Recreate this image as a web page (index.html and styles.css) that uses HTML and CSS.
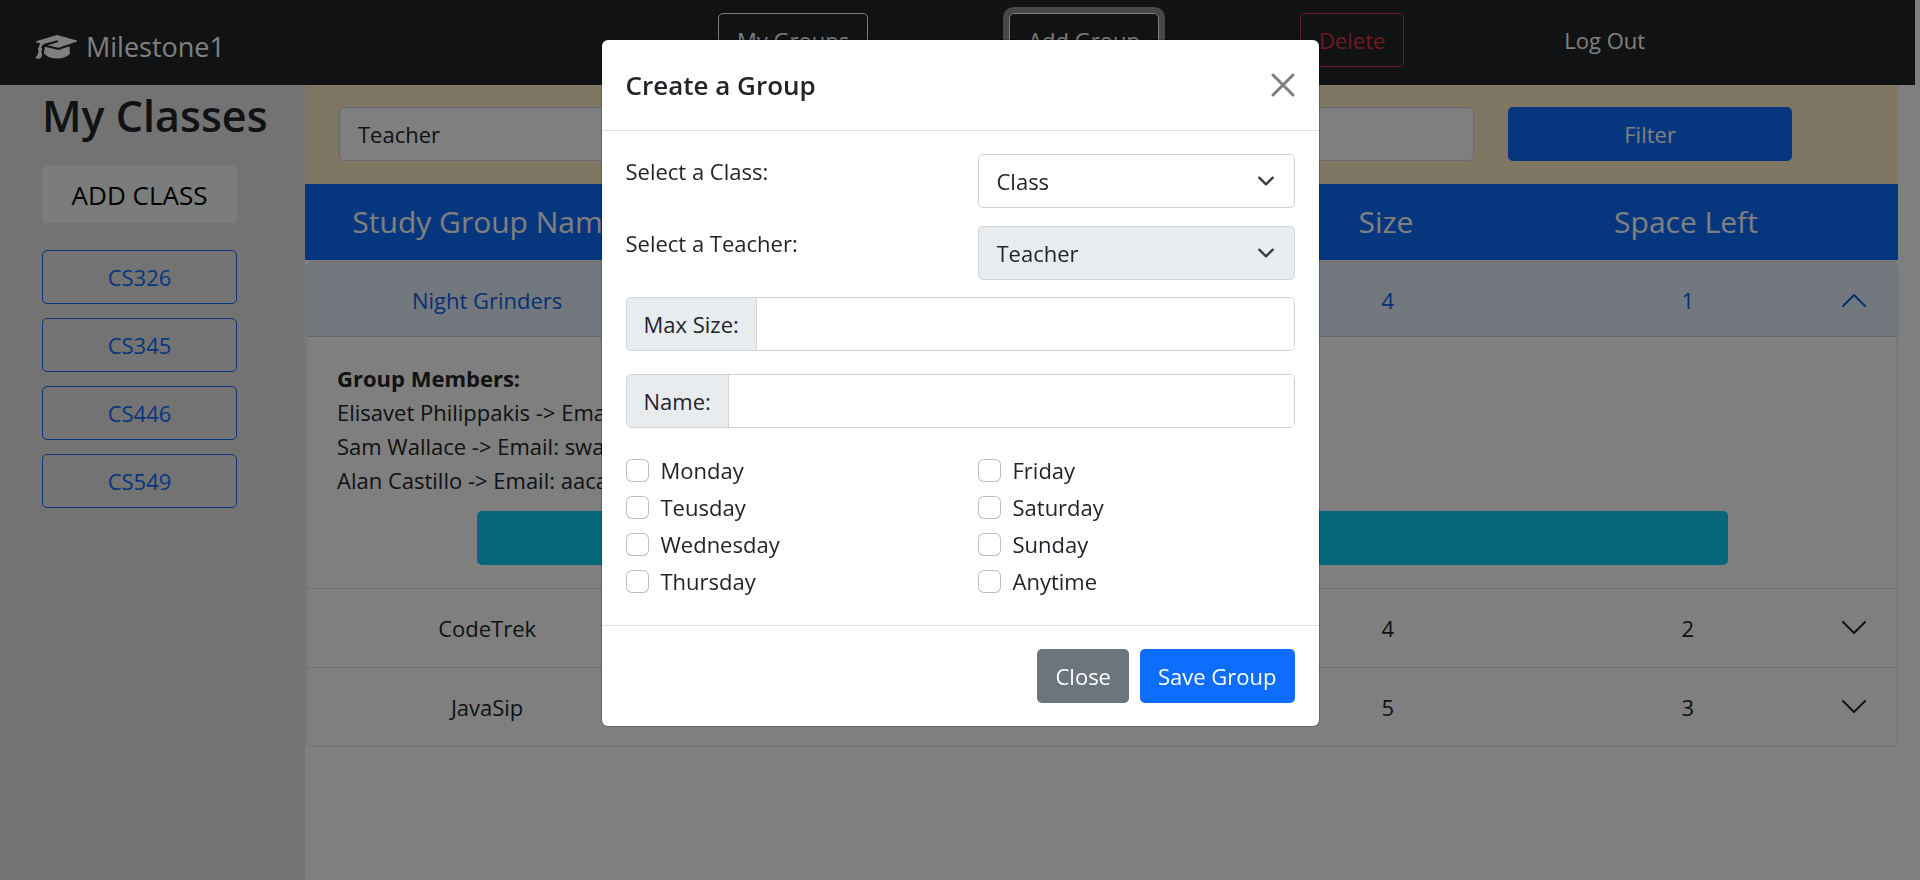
FILE: index.html
```html
<!DOCTYPE html>
<html lang="en">
<head>
<meta charset="utf-8">
<meta name="viewport" content="width=device-width, initial-scale=1">
<title>Milestone1</title>
<link rel="stylesheet" href="styles.css">
</head>
<body>
<header class="navbar">
  <a class="brand" href="#">
    <svg class="brand-icon" viewBox="0 0 42 26" aria-hidden="true">
      <path d="M22 1 42 6.500Q42.500 7 42 7.500L23.500 13.800 12.500 11.300 23.500 8 22.500 6.300 9.500 9.800Q6.500 11 6.300 13.500 8 15 6.500 17L7 22Q6 25 3.500 24.800L0.500 24.300Q0 23.500 1.500 22.500 3.300 20 3.500 17 2.200 15 3.800 13.500 4 11 5.500 9.500L1 8.200Q0.500 7.500 1 7.200Z"/>
      <path d="M10 12.700 23.500 16 34.500 12.200 35 19.500Q31 24.500 22 24.500 13.500 24.500 9 19.500L9 18Q9.500 15 10 12.700Z"/>
    </svg>
    <span>Milestone1</span>
  </a>
  <nav class="nav-links">
    <button class="btn btn-outline-light" type="button">My Groups</button>
    <button class="btn btn-outline-light is-focused" type="button">Add Group</button>
    <button class="btn btn-outline-danger" type="button">Delete</button>
    <a class="btn nav-link" href="#">Log Out</a>
  </nav>
</header>

<div class="page">
  <aside class="sidebar">
    <h1 class="sidebar-title">My Classes</h1>
    <button class="btn btn-add" type="button">ADD CLASS</button>
    <div class="class-list">
      <button class="btn btn-outline-primary" type="button">CS326</button>
      <button class="btn btn-outline-primary" type="button">CS345</button>
      <button class="btn btn-outline-primary" type="button">CS446</button>
      <button class="btn btn-outline-primary" type="button">CS549</button>
    </div>
  </aside>

  <main class="main">
    <form class="filter-bar">
      <select class="select select-plain" aria-label="Filter by teacher"><option>Teacher</option></select>
      <button class="btn btn-primary" type="button">Filter</button>
    </form>
    <div class="grid-row table-head">
      <span>Study Group Name</span><span></span><span></span><span>Size</span><span>Space Left</span>
    </div>
    <section class="accordion">
      <div class="item">
        <button class="grid-row item-head is-open" type="button" aria-expanded="true">
          <span>Night Grinders</span><span></span><span></span><span>4</span><span>1</span>
          <svg class="chevron" viewBox="0 0 24 14" aria-hidden="true"><path d="M1 13 12 2 23 13"/></svg>
        </button>
        <div class="item-body">
          <strong>Group Members:</strong>
          <p>Elisavet Philippakis -&gt; Email:</p>
          <p>Sam Wallace -&gt; Email: swallace</p>
          <p>Alan Castillo -&gt; Email: aacastillo</p>
          <button class="btn btn-info" type="button" aria-label="Join group"></button>
        </div>
      </div>
      <div class="item">
        <button class="grid-row item-head" type="button" aria-expanded="false">
          <span>CodeTrek</span><span></span><span></span><span>4</span><span>2</span>
          <svg class="chevron" viewBox="0 0 24 14" aria-hidden="true"><path d="M1 1 12 12 23 1"/></svg>
        </button>
      </div>
      <div class="item">
        <button class="grid-row item-head" type="button" aria-expanded="false">
          <span>JavaSip</span><span></span><span></span><span>5</span><span>3</span>
          <svg class="chevron" viewBox="0 0 24 14" aria-hidden="true"><path d="M1 1 12 12 23 1"/></svg>
        </button>
      </div>
    </section>
  </main>
</div>

<div class="backdrop">
  <form class="modal" role="dialog" aria-labelledby="modal-title">
    <div class="modal-header">
      <h2 class="modal-title" id="modal-title">Create a Group</h2>
      <button class="close-x" type="button" aria-label="Close">
        <svg viewBox="0 0 24 24" aria-hidden="true"><path d="M2 2 22 22M22 2 2 22"/></svg>
      </button>
    </div>
    <div class="modal-body">
      <div class="pair">
        <label class="pair-label" for="class">Select a Class:</label>
        <select class="select" id="class"><option>Class</option></select>
        <label class="pair-label" for="teacher">Select a Teacher:</label>
        <select class="select" id="teacher" disabled><option>Teacher</option></select>
      </div>
      <div class="input-group">
        <label for="size">Max Size:</label>
        <input id="size" type="text">
      </div>
      <div class="input-group">
        <label for="name">Name:</label>
        <input id="name" type="text">
      </div>
      <div class="days">
        <label class="day"><input type="checkbox">Monday</label>
        <label class="day"><input type="checkbox">Teusday</label>
        <label class="day"><input type="checkbox">Wednesday</label>
        <label class="day"><input type="checkbox">Thursday</label>
        <label class="day"><input type="checkbox">Friday</label>
        <label class="day"><input type="checkbox">Saturday</label>
        <label class="day"><input type="checkbox">Sunday</label>
        <label class="day"><input type="checkbox">Anytime</label>
      </div>
    </div>
    <div class="modal-footer">
      <button class="btn btn-secondary" type="button">Close</button>
      <button class="btn btn-primary" type="button">Save Group</button>
    </div>
  </form>
</div>
</body>
</html>
```

FILE: styles.css
```css
*, *::before, *::after { box-sizing: border-box; }

body {
  margin: 0;
  min-height: 100vh;
  display: flex;
  flex-direction: column;
  background: #fff;
  color: #212529;
  font-family: "Open Sans", "Noto Sans", sans-serif;
  font-size: 22px;
  line-height: 34px;
}

h1, h2, p { margin: 0; }
button, input, select { font: inherit; color: inherit; }

.btn {
  padding: 9px 17px;
  border: 1px solid transparent;
  border-radius: 5px;
  background: transparent;
  text-align: center;
  text-decoration: none;
  white-space: nowrap;
}
.btn-primary { background: #0d6efd; color: #fff; }
.btn-secondary { background: #6c757d; color: #fff; }
.btn-info { background: #0dcaf0; }
.btn-outline-light { border-color: #f8f9fa; color: #f8f9fa; }
.btn-outline-light.is-focused { box-shadow: 0 0 0 6px rgba(248, 249, 250, .5); }
.btn-outline-danger { border-color: #dc3545; color: #dc3545; }
.btn-outline-primary { border-color: #0d6efd; color: #0d6efd; }

.select {
  width: 100%;
  height: 54px;
  padding: 0 48px 0 18px;
  border: 1px solid #ced4da;
  border-radius: 5px;
  appearance: none;
  background: #fff url("data:image/svg+xml,%3Csvg xmlns='http://www.w3.org/2000/svg' viewBox='0 0 16 16'%3E%3Cpath fill='none' stroke='%23343a40' stroke-linecap='round' stroke-linejoin='round' stroke-width='2' d='m2 5 6 6 6-6'/%3E%3C/svg%3E") no-repeat right 19px center / 18px 18px;
}
.select:disabled { background-color: #e9ecef; opacity: 1; color: #212529; }
.select-plain { background-image: none; }

.navbar {
  display: flex;
  align-items: flex-start;
  height: 85px;
  margin-right: 5px;
  padding-top: 13px;
  background: #212529;
}
.brand {
  flex: 0 0 718px;
  display: flex;
  align-items: center;
  gap: 9px;
  padding: 12px 0 0 35px;
  color: #fff;
  font-size: 27px;
  line-height: 44px;
  text-decoration: none;
}
.brand-icon { width: 42px; height: 26px; fill: #fff; }
.nav-links { display: flex; gap: 141px; }
.nav-links .btn { padding: 9px 18px; }
.nav-link { color: #fff; }

.page { flex: 1; display: flex; }

.sidebar {
  flex: 0 0 305px;
  padding: 4px 0 0 42px;
  background: #e6e6e6;
}
.sidebar-title {
  font-size: 43px;
  font-weight: 600;
  line-height: 54px;
  white-space: nowrap;
}
.sidebar .btn { display: block; width: 195px; }
.sidebar .btn-add {
  margin-top: 22px;
  padding: 12px 0 10px;
  background: #f5fbf8;
  color: #000;
  font-size: 26px;
}
.class-list { display: grid; gap: 14px; margin-top: 27px; }

.main { flex: 1; margin-right: 22px; }
.filter-bar {
  display: grid;
  grid-template-columns: 4fr 1fr;
  gap: 34px;
  padding: 22px 106px 23px 34px;
  background: #ffeec8;
}
.grid-row {
  display: grid;
  grid-template-columns: repeat(5, 1fr) 28px;
  align-items: center;
  width: 100%;
  text-align: center;
}
.table-head {
  height: 76px;
  padding: 0 34px 0 31px;
  background: #0d6efd;
  color: #fff;
  font-size: 30px;
  white-space: nowrap;
}
.accordion {
  margin: 1px 0 0 1px;
  border: 1px solid #dfdfdf;
  border-radius: 6px;
  overflow: hidden;
}
.item + .item { border-top: 1px solid #dfdfdf; }
.item-head {
  height: 78px;
  padding: 0 31px 0 30px;
  border: 0;
  background: #fff;
}
.item-head.is-open {
  height: 75px;
  background: #e7f1ff;
  color: #0c63e4;
  box-shadow: inset 0 -1px 0 rgba(0, 0, 0, .125);
}
.chevron {
  justify-self: end;
  width: 24px;
  height: 14px;
  fill: none;
  stroke: currentColor;
  stroke-width: 2;
  stroke-linecap: round;
  stroke-linejoin: round;
}
.item-body { padding: 24px 30px 23px; }
.item-body strong { font-weight: 700; }
.item-body .btn-info {
  display: block;
  width: calc(100% * 10 / 12 - 24px);
  height: 54px;
  margin: 14px auto 0;
}

.backdrop {
  position: fixed;
  inset: 0;
  display: flex;
  justify-content: center;
  align-items: flex-start;
  padding-top: 40px;
  background: rgba(0, 0, 0, .5);
}
.modal {
  width: 717px;
  border-radius: 6px;
  background: #fff;
  box-shadow: 0 0 0 1px rgba(0, 0, 0, .2);
}
.modal-header {
  display: flex;
  justify-content: space-between;
  align-items: center;
  padding: 23px 24px;
  border-bottom: 1px solid #dee2e6;
}
.modal-title { font-size: 26px; font-weight: 600; line-height: 44px; }
.close-x { padding: 0; border: 0; background: none; opacity: .5; }
.close-x svg {
  display: block;
  width: 24px;
  height: 24px;
  fill: none;
  stroke: #000;
  stroke-width: 3;
  stroke-linecap: round;
}
.modal-body { padding: 23px 24px 27px; }
.pair {
  display: grid;
  grid-template-columns: 1fr 317px;
  row-gap: 18px;
}
.input-group {
  display: flex;
  height: 54px;
  margin-top: 17px;
  border: 1px solid #ced4da;
  border-radius: 5px;
  overflow: hidden;
}
.input-group + .input-group { margin-top: 23px; }
.input-group label {
  padding: 9px 17px;
  border-right: 1px solid #ced4da;
  background: #e9ecef;
}
.input-group input { flex: 1; min-width: 0; padding: 0 17px; border: 0; }
.days {
  display: grid;
  grid-auto-flow: column;
  grid-template-rows: repeat(4, 34px);
  grid-template-columns: 1fr 317px;
  row-gap: 3px;
  margin-top: 25px;
}
.day { display: flex; align-items: center; gap: 12px; }
.day input {
  appearance: none;
  width: 23px;
  height: 23px;
  margin: 0;
  border: 1px solid rgba(0, 0, 0, .25);
  border-radius: 6px;
  background: #fff;
}
.modal-footer {
  display: flex;
  justify-content: flex-end;
  gap: 11px;
  padding: 23px 24px;
  border-top: 1px solid #dee2e6;
}
```
